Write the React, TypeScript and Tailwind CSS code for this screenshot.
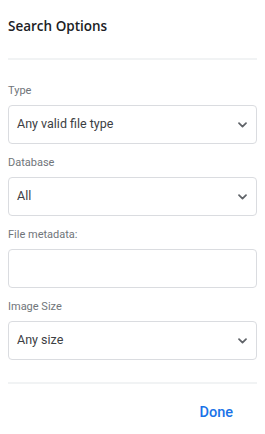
import React from "react";

const Chevron = () => (
  <svg width="9" height="6" viewBox="0 0 9 6" fill="none" className="text-[#5f6368]">
    <path d="M1 1.2l3.5 3.5 3.5-3.5" stroke="currentColor" strokeWidth="1.7" strokeLinecap="round" strokeLinejoin="round" />
  </svg>
);

const SelectBox = ({ value }: { value: string }) => (
  <div className="flex h-[39px] items-center justify-between rounded-[4px] border border-[#dadce0] pl-[8px] pr-[9px]">
    <span className="text-[12.5px] text-[#3c4043]">{value}</span>
    <Chevron />
  </div>
);

const Field = ({ label, children }: { label: string; children: React.ReactNode }) => (
  <div className="mb-[11px]">
    <div className="mb-[6px] h-[16px] text-[11px] leading-[16px] text-[#70757a]">{label}</div>
    {children}
  </div>
);

export default function App() {
  return (
    <div
      className="flex h-[434px] w-[265px] flex-col bg-white px-[8px]"
      style={{ fontFamily: "Roboto, 'Liberation Sans', sans-serif" }}
    >
      <div
        className="pt-[16px] text-[13.5px] font-semibold leading-[20px] text-[#202124]"
        style={{ fontFamily: "'Open Sans', sans-serif" }}
      >
        Search Options
      </div>
      <div className="mt-[22px] mb-[23px] h-[2px] bg-[#f1f3f4]" />
      <Field label="Type">
        <SelectBox value="Any valid file type" />
      </Field>
      <Field label="Database">
        <SelectBox value="All" />
      </Field>
      <Field label="File metadata:">
        <div className="h-[39px] rounded-[4px] border border-[#dadce0]" />
      </Field>
      <Field label="Image Size">
        <SelectBox value="Any size" />
      </Field>
      <div className="mt-[11px] h-[2px] bg-[#f1f3f4]" />
      <div className="flex justify-end pr-[24px] pt-[19px]">
        <button className="text-[14.5px] font-medium leading-[20px] text-[#1a73e8]">Done</button>
      </div>
    </div>
  );
}
